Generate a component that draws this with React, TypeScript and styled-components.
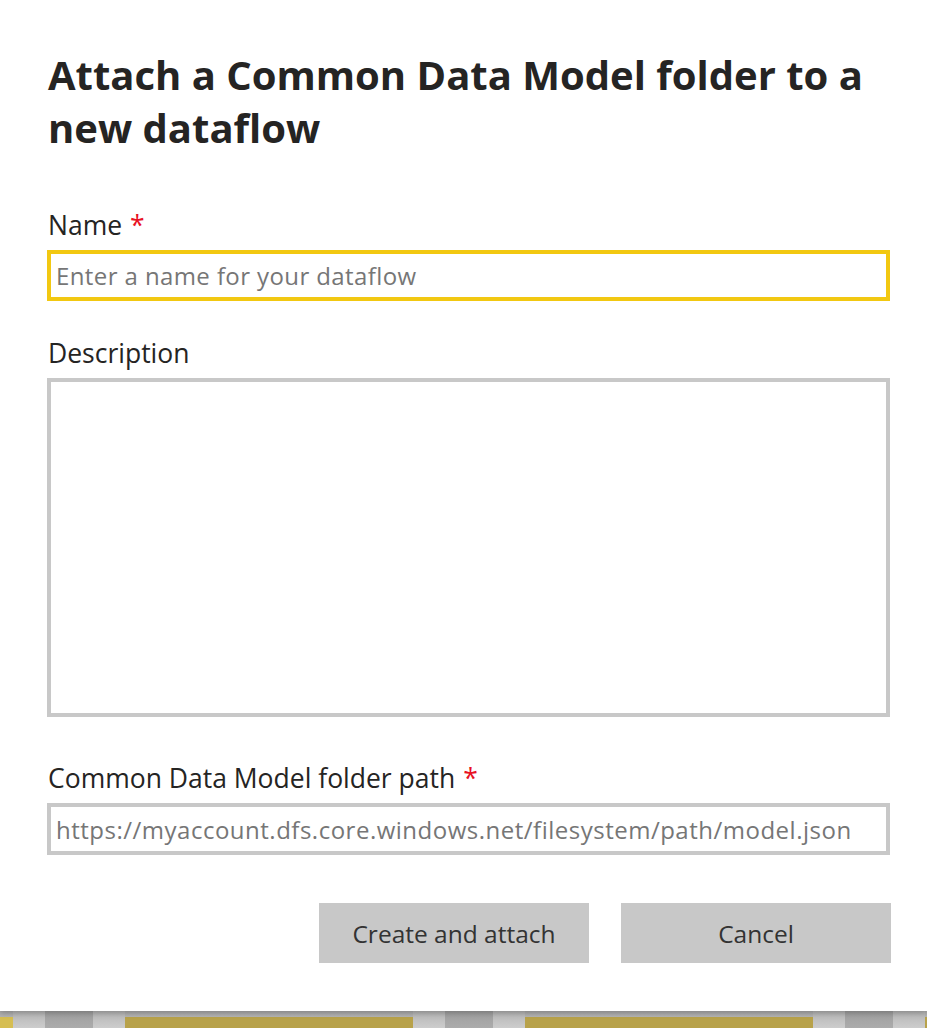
import React from "react";
import styled, { createGlobalStyle } from "styled-components";

const Global = createGlobalStyle`
  html, body { margin: 0; padding: 0; background: #fff; }
  body { font-family: "Open Sans", "Noto Sans", sans-serif; }
  * { box-sizing: border-box; }
`;

const Page = styled.div`
  width: 927px;
  height: 1028px;
  display: flex;
  flex-direction: column;
  overflow: hidden;
`;

const Dialog = styled.div`
  position: relative;
  z-index: 1;
  height: 1011px;
  flex: none;
  background: #fff;
  padding: 48px 37px 0 48px;
  display: flex;
  flex-direction: column;
  box-shadow: 0 2px 6px rgba(0, 0, 0, 0.25);
`;

const Title = styled.h1`
  margin: 0;
  font-size: 40px;
  line-height: 53px;
  font-weight: 700;
  color: #252423;
  letter-spacing: 0;
`;

const Field = styled.div<{ $top: number }>`
  display: flex;
  flex-direction: column;
  gap: 8px;
  margin-top: ${(p) => p.$top}px;
`;

const Label = styled.label`
  font-size: 26.5px;
  line-height: 34px;
  color: #252423;
`;

const Required = styled.span`
  color: #e81123;
  margin-left: 8px;
`;

const TextInput = styled.input<{ $focused?: boolean; $spacing: number }>`
  width: calc(100% + 1px);
  margin-left: -1px;
  height: ${(p) => (p.$focused ? 51 : 52)}px;
  border: 4px solid ${(p) => (p.$focused ? "#f2c811" : "#c8c8c8")};
  outline: none;
  padding: 0 5px;
  font-family: "Open Sans", "Noto Sans", sans-serif;
  font-size: 24px;
  letter-spacing: ${(p) => p.$spacing}px;
  color: #252423;
  background: #fff;
  &::placeholder { color: #767676; opacity: 1; }
`;

const TextArea = styled.textarea`
  width: calc(100% + 1px);
  margin-left: -1px;
  height: 339px;
  border: 4px solid #c8c8c8;
  outline: none;
  resize: none;
  padding: 6px;
  font-family: "Open Sans", "Noto Sans", sans-serif;
  font-size: 22px;
  background: #fff;
`;

const Actions = styled.div`
  display: flex;
  justify-content: flex-end;
  gap: 32px;
  margin-top: 48px;
  margin-right: -1px;
`;

const Button = styled.button`
  width: 270px;
  height: 60px;
  border: none;
  background: #c8c8c8;
  color: #333;
  font-family: "Open Sans", "Noto Sans", sans-serif;
  font-size: 24.5px;
  cursor: pointer;
`;

const Backdrop = styled.div`
  flex: 1;
  display: flex;
  margin-left: -275px;
  background: linear-gradient(180deg, #acacac 0%, #c4c4c4 100%);
`;

const Tile = styled.div<{ $light?: boolean }>`
  flex: none;
  width: 288px;
  margin-top: 6px;
  background: ${(p) => (p.$light ? "#d6be52" : "#b8a24a")};
`;

const Gutter = styled.div<{ $w: number; $dark?: boolean }>`
  flex: none;
  width: ${(p) => p.$w}px;
  background: ${(p) =>
    p.$dark
      ? "linear-gradient(180deg, #9e9e9e 0%, #acacac 100%)"
      : "linear-gradient(180deg, #b4b4b4 0%, #cdcdcd 100%)"};
`;

export default function App() {
  const tiles = [0, 1, 2, 3];
  return (
    <Page>
      <Global />
      <Dialog>
        <Title>Attach a Common Data Model folder to a new dataflow</Title>
        <Field $top={54}>
          <Label>
            Name<Required>*</Required>
          </Label>
          <TextInput $focused $spacing={0.4} placeholder="Enter a name for your dataflow" />
        </Field>
        <Field $top={35}>
          <Label>Description</Label>
          <TextArea />
        </Field>
        <Field $top={44}>
          <Label>
            Common Data Model folder path<Required>*</Required>
          </Label>
          <TextInput
            $spacing={0.5}
            placeholder="https://myaccount.dfs.core.windows.net/filesystem/path/model.json"
          />
        </Field>
        <Actions>
          <Button>Create and attach</Button>
          <Button>Cancel</Button>
        </Actions>
      </Dialog>
      <Backdrop>
        {tiles.map((i) => (
          <React.Fragment key={i}>
            <Tile $light={i === 0} />
            <Gutter $w={32} />
            <Gutter $w={48} $dark />
            <Gutter $w={32} />
          </React.Fragment>
        ))}
      </Backdrop>
    </Page>
  );
}
